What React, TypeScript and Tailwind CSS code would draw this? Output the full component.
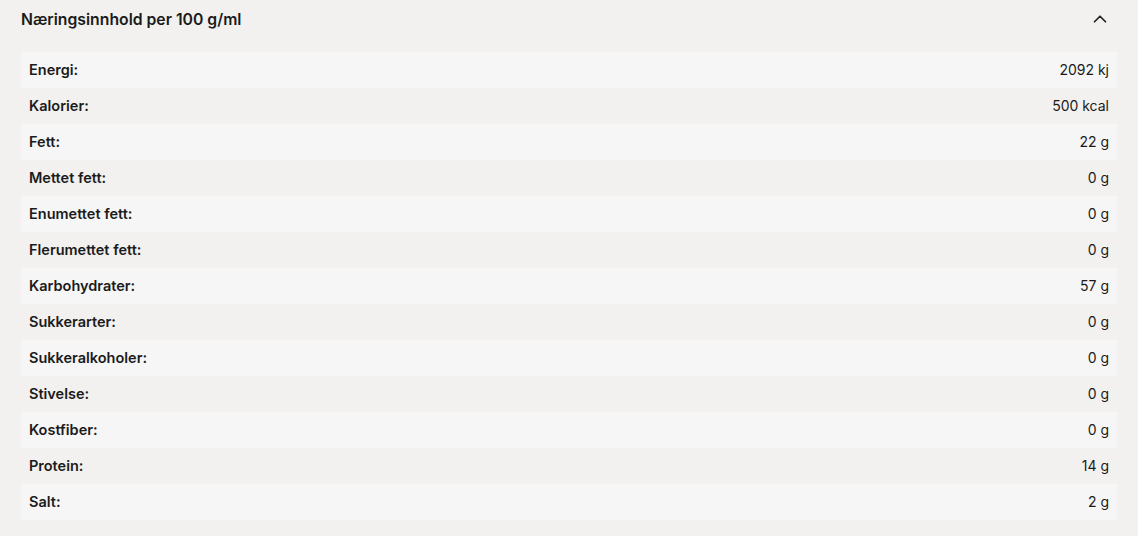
import { ChevronUp } from 'lucide-react';

const rows: [string, string][] = [
  ['Energi:', '2092 kj'],
  ['Kalorier:', '500 kcal'],
  ['Fett:', '22 g'],
  ['Mettet fett:', '0 g'],
  ['Enumettet fett:', '0 g'],
  ['Flerumettet fett:', '0 g'],
  ['Karbohydrater:', '57 g'],
  ['Sukkerarter:', '0 g'],
  ['Sukkeralkoholer:', '0 g'],
  ['Stivelse:', '0 g'],
  ['Kostfiber:', '0 g'],
  ['Protein:', '14 g'],
  ['Salt:', '2 g'],
];

export default function App() {
  return (
    <div className="min-h-[536px] w-full bg-[#f2f1ef] px-[21px] text-[#1b1b1b] font-['Inter','Liberation_Sans',sans-serif]">
      {/* Header */}
      <div className="flex h-[52px] items-start justify-between pt-[9px]">
        <h3 className="text-[15.75px] font-semibold leading-[22px]">Næringsinnhold per 100 g/ml</h3>
        <ChevronUp className="mr-[6px] mt-[-1px] h-[22px] w-[22px] text-[#222]" strokeWidth={1.9} />
      </div>

      {/* Table */}
      <div>
        {rows.map(([label, value], idx) => (
          <div
            key={label}
            className={`flex h-9 items-center justify-between px-2 ${
              idx % 2 === 0 ? 'bg-[#f6f6f6]' : 'bg-[#f2f1ef]'
            }`}
          >
            <span className="text-[14.5px] font-semibold">{label}</span>
            <span className="text-sm">{value}</span>
          </div>
        ))}
      </div>
    </div>
  );
}
